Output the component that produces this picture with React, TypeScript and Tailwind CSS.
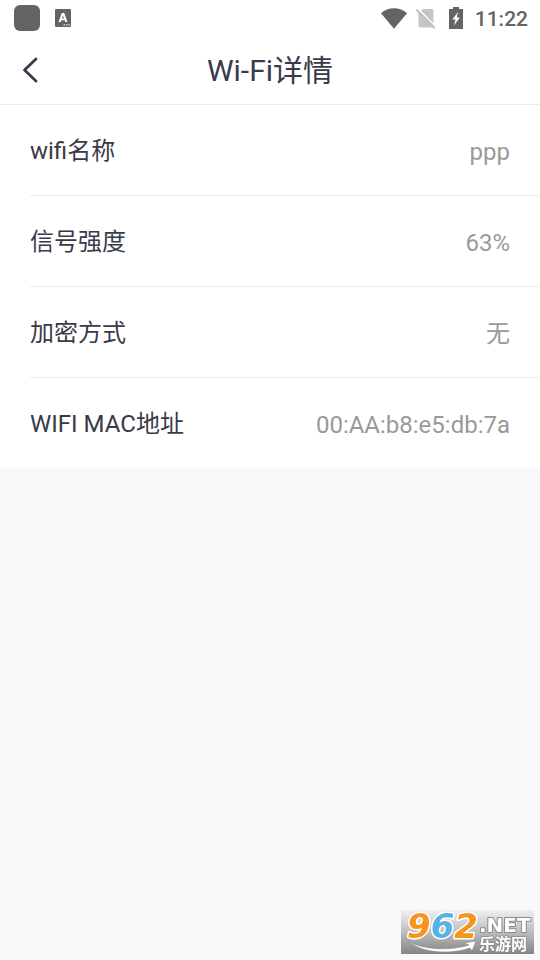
type Detail = { label: string; value: string };

const details: Detail[] = [
  { label: "wifi名称", value: "ppp" },
  { label: "信号强度", value: "63%" },
  { label: "加密方式", value: "无" },
  { label: "WIFI MAC地址", value: "00:AA:b8:e5:db:7a" },
];

function KeyboardIcon() {
  return (
    <svg width="16" height="18" viewBox="0 0 16 18" aria-hidden="true">
      <rect width="16" height="18" rx="1" fill="#646464" />
      <path
        d="M6.800 4h2.400l3.300 9h-2.300l-.6-1.800H6.400L5.800 13H3.500ZM8 6.500 7 9.600h2Z"
        fill="#fff"
        fillRule="evenodd"
      />
      <path d="M8.500 15.200h1.600v1.300H8.500zM11 15.200h1.600v1.300H11zM13.400 15.200h1.400v1.300h-1.400z" fill="#e0e0e0" />
    </svg>
  );
}

function WifiIcon() {
  return (
    <svg width="26" height="21" viewBox="0 0 26 21" aria-hidden="true">
      <path d="M0 5.200C3.600 1.900 8 .2 13 .2S22.400 1.900 26 5.200L13 20.800Z" fill="#646464" />
    </svg>
  );
}

function NoSimIcon() {
  return (
    <svg width="20" height="21" viewBox="0 0 20 21" aria-hidden="true">
      <path d="M7 1h9a1.500 1.500 0 0 1 1.500 1.500V19.500H4A1.500 1.500 0 0 1 2.500 18V5.500Z" fill="#c6c6c6" />
      <path d="M1.500 .2 20 19" stroke="#fff" strokeWidth="1.500" />
      <path d="M.4 1.600 18.800 20.200" stroke="#bdbdbd" strokeWidth="1.800" />
    </svg>
  );
}

function BatteryIcon() {
  return (
    <svg width="14" height="22" viewBox="0 0 14 22" aria-hidden="true">
      <path d="M4 0h6v2H14v20H0V2h4Z" fill="#646464" />
      <path d="M9 5 3.300 12.500h3.200L5 18.500 10.800 10.500H7.800Z" fill="#fff" />
    </svg>
  );
}

function SiteBadge() {
  return (
    <svg
      className="fixed right-1.5 bottom-1.5 overflow-visible"
      width="133"
      height="44"
      viewBox="0 0 133 44"
      role="img"
      aria-label="962.NET 乐游网"
    >
      <defs>
        <linearGradient id="plate" x1="0" y1="0" x2="0" y2="1">
          <stop offset="0" stopColor="#f0f0f0" />
          <stop offset="0.5" stopColor="#bdbdbd" />
          <stop offset="1" stopColor="#858585" />
        </linearGradient>
      </defs>
      <rect width="133" height="44" fill="url(#plate)" />
      <path d="M7 31c14 9 43 10 61 4l-5-2 12-2-4 10-2-3c-20 7-49 5-62-7Z" fill="#fff" stroke="#8a8a8a" strokeWidth="0.6" />
      <g
        fontFamily='"DejaVu Sans", sans-serif'
        fontWeight="700"
        paintOrder="stroke"
        strokeLinejoin="round"
      >
        <text x="6" y="28" fontSize="34" fontStyle="italic" stroke="#fff" strokeWidth="3">
          <tspan fill="#f7941d">9</tspan>
          <tspan fill="#5ab2e4">6</tspan>
          <tspan fill="#f7941d">2</tspan>
        </text>
        <text x="78" y="22" fontSize="20" fill="#fff" stroke="#8a8a8a" strokeWidth="2">
          .NET
        </text>
      </g>
      <text
        x="78"
        y="40"
        fontSize="16"
        fontWeight="700"
        fontFamily='"Noto Sans CJK SC", sans-serif'
        fill="#fff"
        stroke="#8a8a8a"
        strokeWidth="1.500"
        paintOrder="stroke"
      >
        乐游网
      </text>
    </svg>
  );
}

export default function App() {
  return (
    <div className="min-h-screen bg-[#f9f9fb] font-[Roboto,'Noto_Sans_CJK_SC',sans-serif] text-[#3a3a48]">
      <div className="bg-white">
        <div className="flex h-9 items-center justify-between pr-3 pl-3.5 text-[#646464]">
          <div className="flex items-center gap-[15px]">
            <span className="size-[26px] rounded-md bg-[#646464]" />
            <KeyboardIcon />
          </div>
          <div className="flex items-center">
            <WifiIcon />
            <span className="ml-[9px]">
              <NoSimIcon />
            </span>
            <span className="ml-[13px]">
              <BatteryIcon />
            </span>
            <time className="ml-3 pt-0.5 text-[21px] leading-6 font-medium">11:22</time>
          </div>
        </div>

        <header className="grid h-[69px] grid-cols-[60px_1fr_60px] items-center border-b border-[#ebebeb]">
          <button type="button" aria-label="返回" className="flex h-full items-center pl-[22px]">
            <svg width="16" height="26" viewBox="0 0 16 26" fill="none" aria-hidden="true">
              <path d="M14 2 2.500 13 14 24" stroke="#3a3a48" strokeWidth="2.800" strokeLinecap="round" strokeLinejoin="round" />
            </svg>
          </button>
          <h1 className="pt-0.5 text-center text-[30px] leading-10">Wi-Fi详情</h1>
        </header>

        <dl>
          {details.map(({ label, value }) => (
            <div key={label} className="group pl-[30px]">
              <div className="flex h-[91px] items-center justify-between border-b border-[#ebebeb] pr-[30px] text-2xl group-last:h-[90px] group-last:border-b-0">
                <dt className="pt-0.5">{label}</dt>
                <dd className="pt-1 text-[#999999]">{value}</dd>
              </div>
            </div>
          ))}
        </dl>
      </div>
      <SiteBadge />
    </div>
  );
}
